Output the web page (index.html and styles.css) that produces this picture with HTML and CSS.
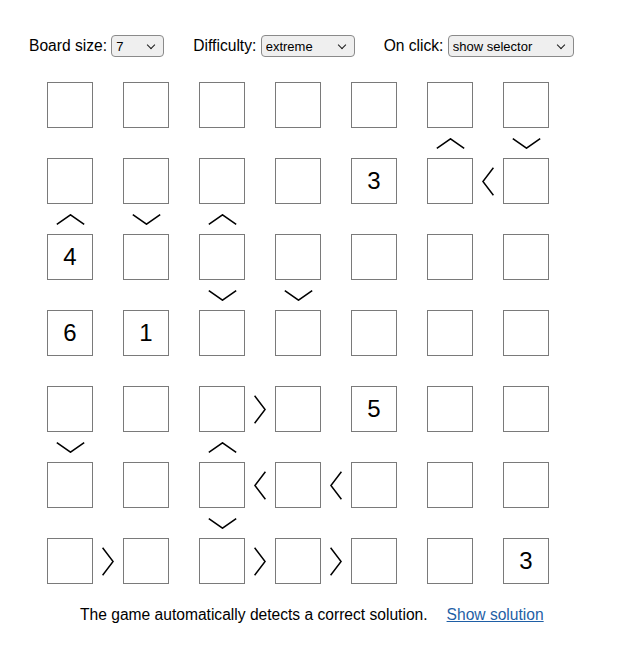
FILE: index.html
```html
<!DOCTYPE html>
<html>
<head>
<meta charset="utf-8">
<link rel="stylesheet" href="styles.css">
</head>
<body>
<svg class="defs" width="0" height="0" aria-hidden="true">
  <symbol id="up" viewBox="0 0 29 11"><polyline points="0.8,10.4 14.5,0.8 28.2,10.4"/></symbol>
  <symbol id="down" viewBox="0 0 29 11"><polyline points="0.8,0.6 14.5,10.2 28.2,0.6"/></symbol>
  <symbol id="left" viewBox="0 0 12 29"><polyline points="11.4,0.8 0.9,14.5 11.4,28.2"/></symbol>
  <symbol id="right" viewBox="0 0 12 29"><polyline points="0.6,0.8 11.1,14.5 0.6,28.2"/></symbol>
</svg>

<div class="controls">
  <label class="ctl">Board size: <span class="selwrap"><select class="sel sel-size"><option>7</option></select></span></label>
  <label class="ctl">Difficulty: <span class="selwrap"><select class="sel sel-diff"><option>extreme</option></select></span></label>
  <label class="ctl">On click: <span class="selwrap"><select class="sel sel-click"><option>show selector</option></select></span></label>
</div>

<div class="board">
  <!-- row 0 -->
  <div class="row">
    <div class="cell"></div><div class="hg"></div>
    <div class="cell"></div><div class="hg"></div>
    <div class="cell"></div><div class="hg"></div>
    <div class="cell"></div><div class="hg"></div>
    <div class="cell"></div><div class="hg"></div>
    <div class="cell"></div><div class="hg"></div>
    <div class="cell"></div>
  </div>
  <div class="sep">
    <div class="vg"></div><div class="vg"></div><div class="vg"></div><div class="vg"></div><div class="vg"></div>
    <div class="vg"><svg class="cv"><use href="#up"/></svg></div>
    <div class="vg"><svg class="cv"><use href="#down"/></svg></div>
  </div>
  <!-- row 1 -->
  <div class="row">
    <div class="cell"></div><div class="hg"></div>
    <div class="cell"></div><div class="hg"></div>
    <div class="cell"></div><div class="hg"></div>
    <div class="cell"></div><div class="hg"></div>
    <div class="cell">3</div><div class="hg"></div>
    <div class="cell"></div><div class="hg"><svg class="ch"><use href="#left"/></svg></div>
    <div class="cell"></div>
  </div>
  <div class="sep">
    <div class="vg"><svg class="cv"><use href="#up"/></svg></div>
    <div class="vg"><svg class="cv"><use href="#down"/></svg></div>
    <div class="vg"><svg class="cv"><use href="#up"/></svg></div>
    <div class="vg"></div><div class="vg"></div><div class="vg"></div><div class="vg"></div>
  </div>
  <!-- row 2 -->
  <div class="row">
    <div class="cell">4</div><div class="hg"></div>
    <div class="cell"></div><div class="hg"></div>
    <div class="cell"></div><div class="hg"></div>
    <div class="cell"></div><div class="hg"></div>
    <div class="cell"></div><div class="hg"></div>
    <div class="cell"></div><div class="hg"></div>
    <div class="cell"></div>
  </div>
  <div class="sep">
    <div class="vg"></div><div class="vg"></div>
    <div class="vg"><svg class="cv"><use href="#down"/></svg></div>
    <div class="vg"><svg class="cv"><use href="#down"/></svg></div>
    <div class="vg"></div><div class="vg"></div><div class="vg"></div>
  </div>
  <!-- row 3 -->
  <div class="row">
    <div class="cell">6</div><div class="hg"></div>
    <div class="cell">1</div><div class="hg"></div>
    <div class="cell"></div><div class="hg"></div>
    <div class="cell"></div><div class="hg"></div>
    <div class="cell"></div><div class="hg"></div>
    <div class="cell"></div><div class="hg"></div>
    <div class="cell"></div>
  </div>
  <div class="sep">
    <div class="vg"></div><div class="vg"></div><div class="vg"></div><div class="vg"></div><div class="vg"></div><div class="vg"></div><div class="vg"></div>
  </div>
  <!-- row 4 -->
  <div class="row">
    <div class="cell"></div><div class="hg"></div>
    <div class="cell"></div><div class="hg"></div>
    <div class="cell"></div><div class="hg"><svg class="ch"><use href="#right"/></svg></div>
    <div class="cell"></div><div class="hg"></div>
    <div class="cell">5</div><div class="hg"></div>
    <div class="cell"></div><div class="hg"></div>
    <div class="cell"></div>
  </div>
  <div class="sep">
    <div class="vg"><svg class="cv"><use href="#down"/></svg></div>
    <div class="vg"></div>
    <div class="vg"><svg class="cv"><use href="#up"/></svg></div>
    <div class="vg"></div><div class="vg"></div><div class="vg"></div><div class="vg"></div>
  </div>
  <!-- row 5 -->
  <div class="row">
    <div class="cell"></div><div class="hg"></div>
    <div class="cell"></div><div class="hg"></div>
    <div class="cell"></div><div class="hg"><svg class="ch"><use href="#left"/></svg></div>
    <div class="cell"></div><div class="hg"><svg class="ch"><use href="#left"/></svg></div>
    <div class="cell"></div><div class="hg"></div>
    <div class="cell"></div><div class="hg"></div>
    <div class="cell"></div>
  </div>
  <div class="sep">
    <div class="vg"></div><div class="vg"></div>
    <div class="vg"><svg class="cv"><use href="#down"/></svg></div>
    <div class="vg"></div><div class="vg"></div><div class="vg"></div><div class="vg"></div>
  </div>
  <!-- row 6 -->
  <div class="row">
    <div class="cell"></div><div class="hg"><svg class="ch"><use href="#right"/></svg></div>
    <div class="cell"></div><div class="hg"></div>
    <div class="cell"></div><div class="hg"><svg class="ch"><use href="#right"/></svg></div>
    <div class="cell"></div><div class="hg"><svg class="ch"><use href="#right"/></svg></div>
    <div class="cell"></div><div class="hg"></div>
    <div class="cell"></div><div class="hg"></div>
    <div class="cell">3</div>
  </div>
</div>

<div class="footer">
  <span class="note">The game automatically detects a correct solution.</span>
  <a class="link" href="#">Show solution</a>
</div>
</body>
</html>
```

FILE: styles.css
```css
html, body {
  margin: 0;
  padding: 0;
  background: #ffffff;
}

body {
  font-family: "Liberation Sans", Arial, sans-serif;
  font-size: 15.6px;
  color: #000000;
}

.defs {
  position: absolute;
  width: 0;
  height: 0;
  overflow: hidden;
}

.defs polyline,
.cv polyline,
.ch polyline {
  fill: none;
  stroke: #000000;
  stroke-width: 1.5;
}

.controls {
  display: flex;
  align-items: center;
  gap: 29px;
  height: 22px;
  margin-top: 35px;
  padding-left: 29px;
}

.ctl {
  display: flex;
  align-items: center;
  white-space: pre;
}

.selwrap {
  position: relative;
  display: inline-flex;
}

.selwrap::after {
  content: "";
  position: absolute;
  right: 10px;
  top: 7px;
  width: 5px;
  height: 5px;
  border-right: 1.6px solid #1a1a1a;
  border-bottom: 1.6px solid #1a1a1a;
  transform: rotate(45deg);
  pointer-events: none;
}

.sel {
  -webkit-appearance: none;
  appearance: none;
  box-sizing: border-box;
  height: 22px;
  padding: 0 0 0 4px;
  font-family: "Liberation Sans", Arial, sans-serif;
  font-size: 13px;
  color: #000;
  background: #efefef;
  border: 1px solid #8a8a8a;
  border-radius: 4px;
  margin: 0;
}

.sel-size { width: 53px; }
.sel-diff { width: 94px; }
.sel-click { width: 126px; }

.board {
  display: flex;
  flex-direction: column;
  margin-top: 25px;
  margin-left: 47px;
  width: 502px;
}

.row {
  display: flex;
  height: 46px;
}

.cell {
  box-sizing: border-box;
  width: 46px;
  height: 46px;
  border: 1px solid #7a7a7a;
  display: flex;
  align-items: center;
  justify-content: center;
  font-size: 24px;
  line-height: 1;
}

.hg {
  width: 30px;
  height: 46px;
  display: flex;
  align-items: center;
  justify-content: center;
}

.sep {
  display: flex;
  gap: 30px;
  height: 30px;
}

.vg {
  width: 46px;
  height: 30px;
  display: flex;
  align-items: center;
  justify-content: center;
}

.cv {
  width: 29px;
  height: 11px;
  overflow: visible;
}

.ch {
  width: 12px;
  height: 29px;
  overflow: visible;
}

.footer {
  display: flex;
  gap: 19px;
  margin-top: 22px;
  padding-left: 80px;
  line-height: 18px;
}

.link {
  color: #1f5fa6;
  text-decoration: underline;
}
```
